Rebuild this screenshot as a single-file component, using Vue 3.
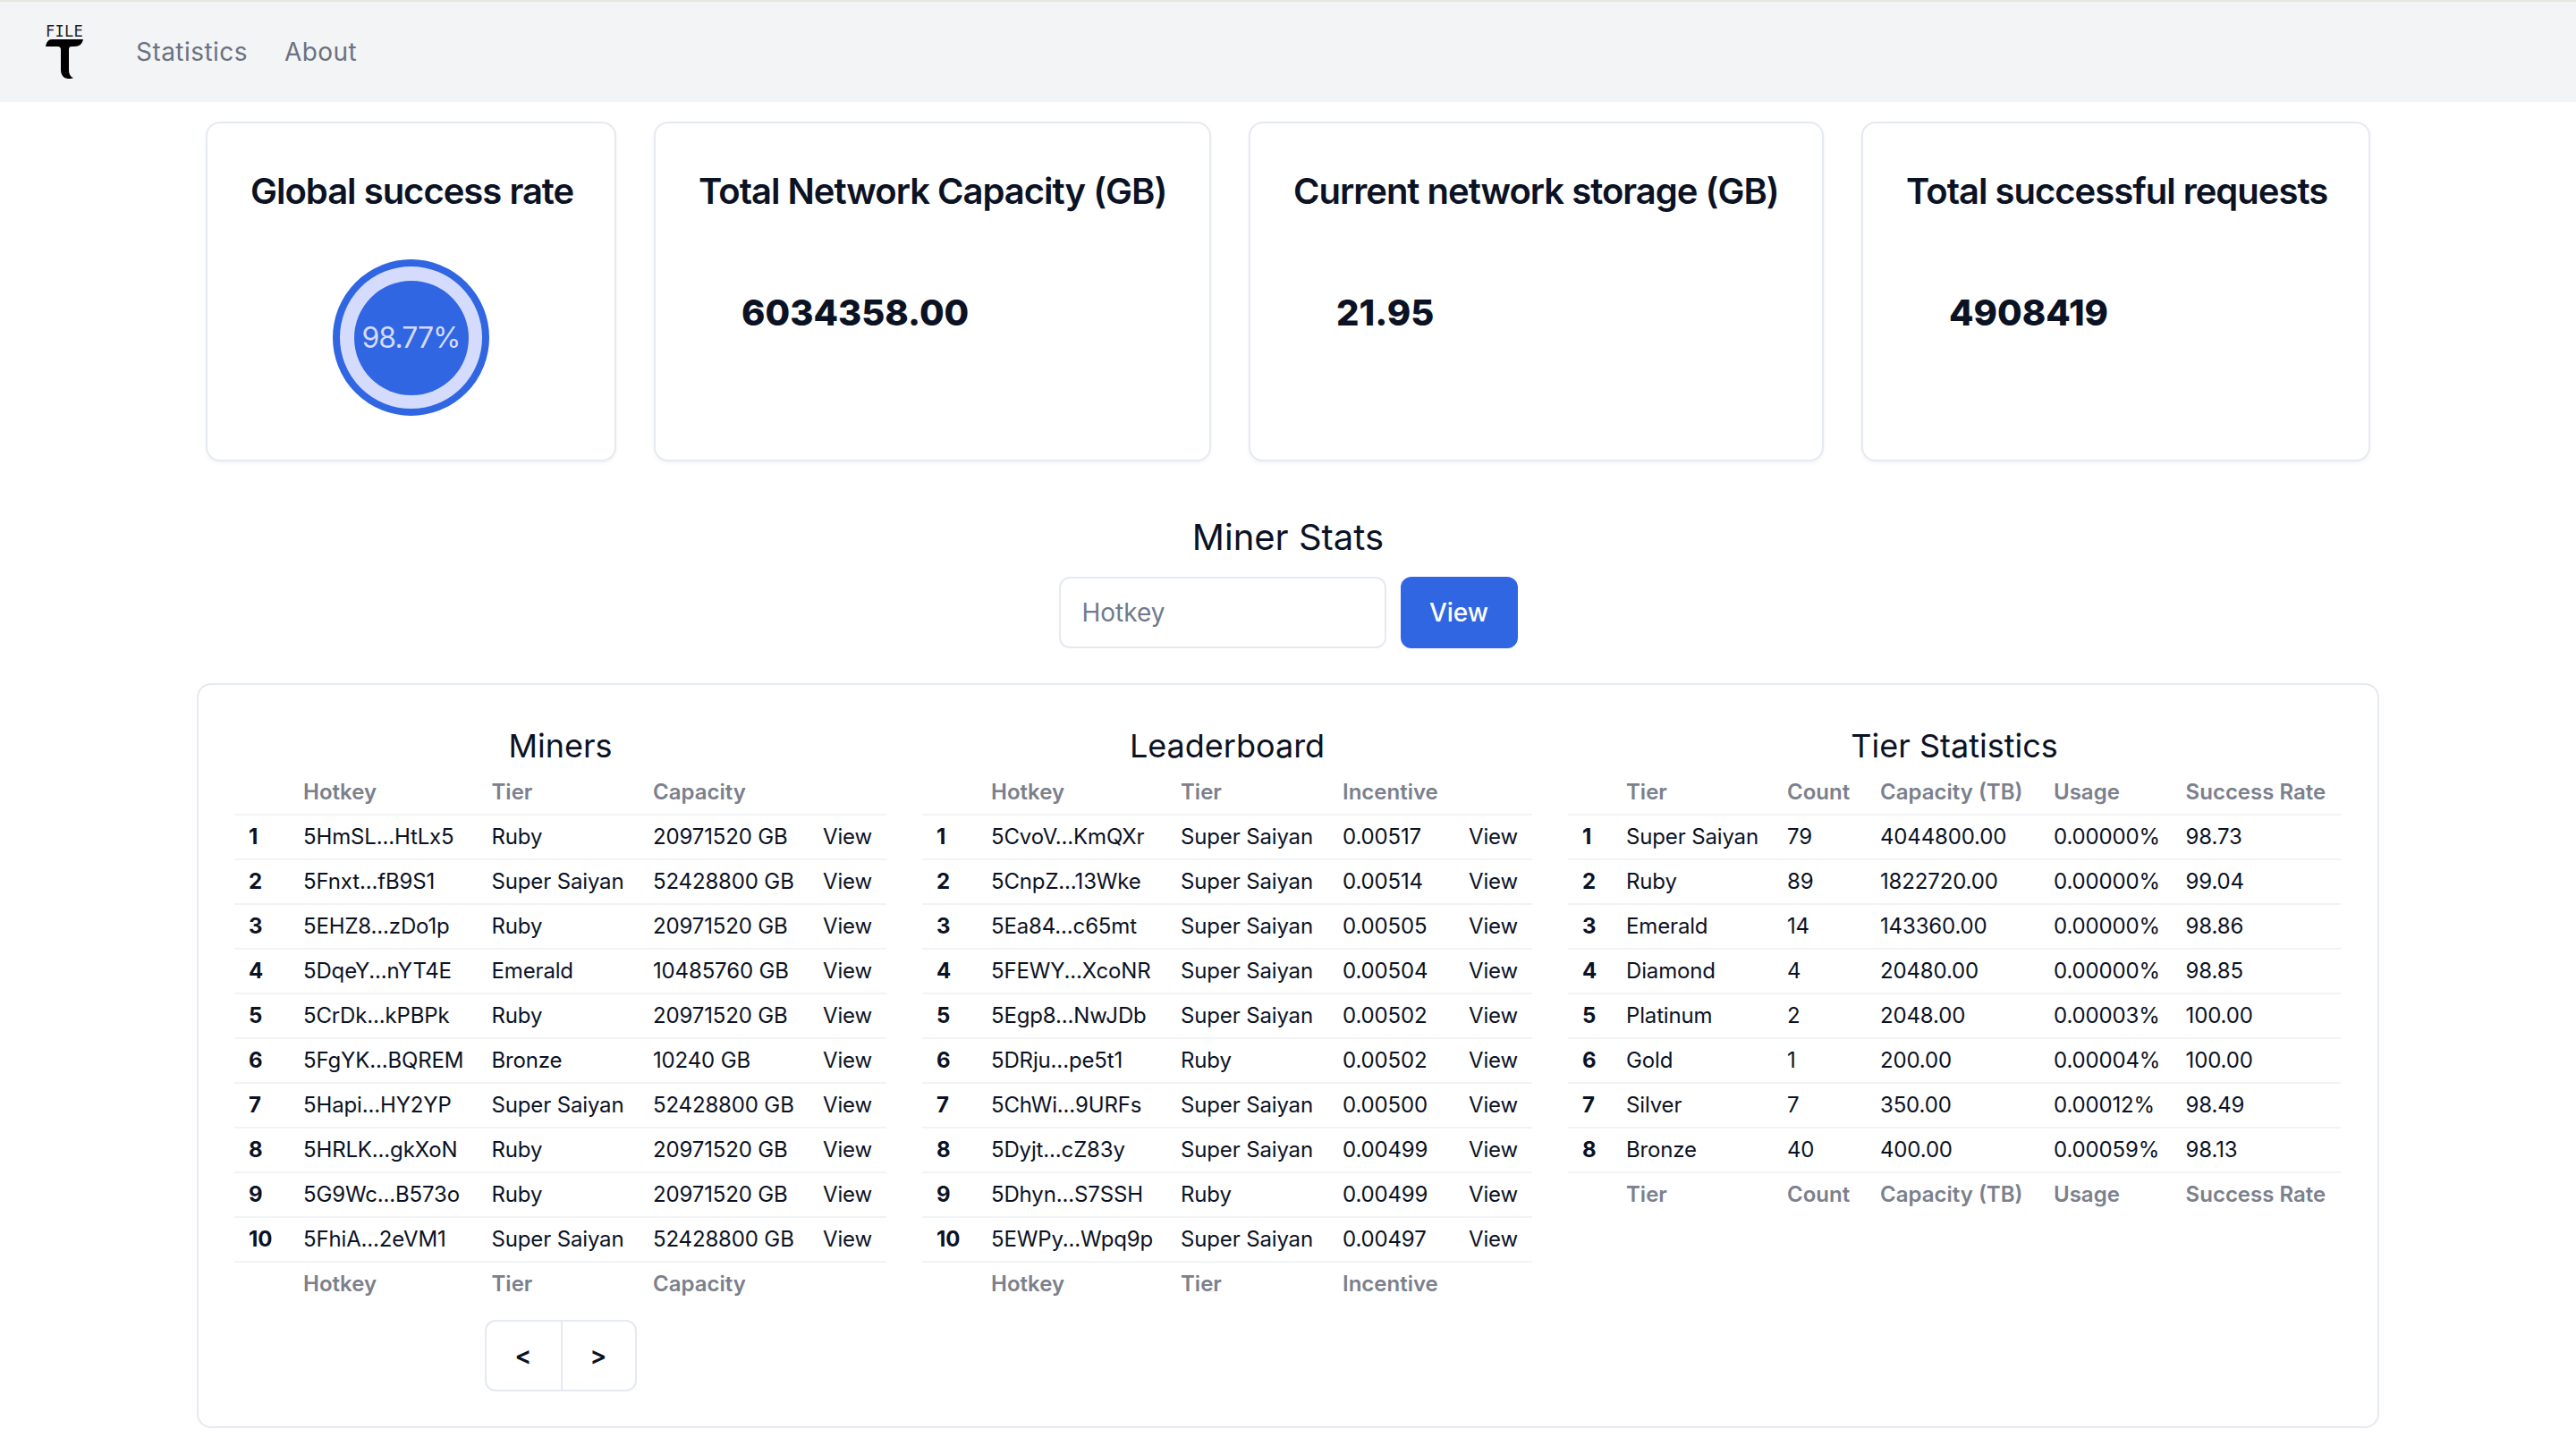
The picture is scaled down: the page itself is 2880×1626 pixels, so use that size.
<script setup>
const miners = [
  ['5HmSL...HtLx5', 'Ruby', '20971520 GB'],
  ['5Fnxt...fB9S1', 'Super Saiyan', '52428800 GB'],
  ['5EHZ8...zDo1p', 'Ruby', '20971520 GB'],
  ['5DqeY...nYT4E', 'Emerald', '10485760 GB'],
  ['5CrDk...kPBPk', 'Ruby', '20971520 GB'],
  ['5FgYK...BQREM', 'Bronze', '10240 GB'],
  ['5Hapi...HY2YP', 'Super Saiyan', '52428800 GB'],
  ['5HRLK...gkXoN', 'Ruby', '20971520 GB'],
  ['5G9Wc...B573o', 'Ruby', '20971520 GB'],
  ['5FhiA...2eVM1', 'Super Saiyan', '52428800 GB'],
]

const leaders = [
  ['5CvoV...KmQXr', 'Super Saiyan', '0.00517'],
  ['5CnpZ...13Wke', 'Super Saiyan', '0.00514'],
  ['5Ea84...c65mt', 'Super Saiyan', '0.00505'],
  ['5FEWY...XcoNR', 'Super Saiyan', '0.00504'],
  ['5Egp8...NwJDb', 'Super Saiyan', '0.00502'],
  ['5DRju...pe5t1', 'Ruby', '0.00502'],
  ['5ChWi...9URFs', 'Super Saiyan', '0.00500'],
  ['5Dyjt...cZ83y', 'Super Saiyan', '0.00499'],
  ['5Dhyn...S7SSH', 'Ruby', '0.00499'],
  ['5EWPy...Wpq9p', 'Super Saiyan', '0.00497'],
]

const tiers = [
  ['Super Saiyan', '79', '4044800.00', '0.00000%', '98.73'],
  ['Ruby', '89', '1822720.00', '0.00000%', '99.04'],
  ['Emerald', '14', '143360.00', '0.00000%', '98.86'],
  ['Diamond', '4', '20480.00', '0.00000%', '98.85'],
  ['Platinum', '2', '2048.00', '0.00003%', '100.00'],
  ['Gold', '1', '200.00', '0.00004%', '100.00'],
  ['Silver', '7', '350.00', '0.00012%', '98.49'],
  ['Bronze', '40', '400.00', '0.00059%', '98.13'],
]

const tierHead = ['Tier', 'Count', 'Capacity (TB)', 'Usage', 'Success Rate']
</script>

<template>
  <div class="page">
    <nav class="navbar">
      <svg class="logo" viewBox="0 0 44 60" aria-label="File T logo">
        <text x="1" y="13" class="logo-text">FILE</text>
        <path d="M1 24 C2 19 4 16 8 16 L43 16 C42 21 39 24 33 24 L30 24 C28 24 27 25 27 27 L27 50 C27 55 29 58 32 59 C28 61 18 61 18 50 L18 28 C18 25 17 24 14 24 Z" fill="#000" />
      </svg>
      <a class="nav-link">Statistics</a>
      <a class="nav-link">About</a>
    </nav>

    <section class="stats">
      <div class="card stat first">
        <h2>Global success rate</h2>
        <div class="radial"><span>98.77%</span></div>
      </div>
      <div class="card stat second">
        <h2>Total Network Capacity (GB)</h2>
        <p class="value">6034358.00</p>
      </div>
      <div class="card stat third">
        <h2>Current network storage (GB)</h2>
        <p class="value">21.95</p>
      </div>
      <div class="card stat fourth">
        <h2>Total successful requests</h2>
        <p class="value">4908419</p>
      </div>
    </section>

    <section class="lookup">
      <h3>Miner Stats</h3>
      <div class="lookup-row">
        <input class="input" placeholder="Hotkey" />
        <button class="btn">View</button>
      </div>
    </section>

    <section class="card tables">
      <div class="col miners">
        <h3>Miners</h3>
        <table>
          <thead>
            <tr><th></th><th>Hotkey</th><th>Tier</th><th>Capacity</th><th></th></tr>
          </thead>
          <tbody>
            <tr v-for="(m, i) in miners" :key="m[0]">
              <th>{{ i + 1 }}</th>
              <td>{{ m[0] }}</td>
              <td>{{ m[1] }}</td>
              <td>{{ m[2] }}</td>
              <td>View</td>
            </tr>
          </tbody>
          <tfoot>
            <tr><th></th><th>Hotkey</th><th>Tier</th><th>Capacity</th><th></th></tr>
          </tfoot>
        </table>
        <div class="pager">
          <button>&lt;</button>
          <button>&gt;</button>
        </div>
      </div>

      <div class="col leaders">
        <h3>Leaderboard</h3>
        <table>
          <thead>
            <tr><th></th><th>Hotkey</th><th>Tier</th><th>Incentive</th><th></th></tr>
          </thead>
          <tbody>
            <tr v-for="(m, i) in leaders" :key="m[0]">
              <th>{{ i + 1 }}</th>
              <td>{{ m[0] }}</td>
              <td>{{ m[1] }}</td>
              <td>{{ m[2] }}</td>
              <td>View</td>
            </tr>
          </tbody>
          <tfoot>
            <tr><th></th><th>Hotkey</th><th>Tier</th><th>Incentive</th><th></th></tr>
          </tfoot>
        </table>
      </div>

      <div class="col tiers">
        <h3>Tier Statistics</h3>
        <table>
          <thead>
            <tr><th></th><th v-for="h in tierHead" :key="h">{{ h }}</th></tr>
          </thead>
          <tbody>
            <tr v-for="(t, i) in tiers" :key="t[0]">
              <th>{{ i + 1 }}</th>
              <td v-for="(c, j) in t" :key="j">{{ c }}</td>
            </tr>
          </tbody>
          <tfoot>
            <tr><th></th><th v-for="h in tierHead" :key="h">{{ h }}</th></tr>
          </tfoot>
        </table>
      </div>
    </section>
  </div>
</template>

<style>
html,
body {
  margin: 0;
  background: #fff;
}
</style>

<style scoped>
.page {
  font-family: Inter, 'Liberation Sans', sans-serif;
  color: #0b1224;
  height: 1626px;
  overflow: hidden;
}

.navbar {
  height: 112px;
  border-top: 2px solid #e5e7e0;
  background: #f3f4f6;
  display: flex;
  align-items: center;
  padding-left: 50px;
}

.logo {
  width: 44px;
  height: 60px;
  margin-right: 58px;
  overflow: visible;
}

.logo-text {
  font-family: 'DejaVu Sans Mono', monospace;
  font-size: 17px;
  letter-spacing: 0.3px;
  fill: #222;
}

.nav-link {
  font-size: 28px;
  letter-spacing: 0.45px;
  color: #6b7280;
  margin-right: 41px;
}

.card {
  border: 2px solid #e5e9f0;
  border-radius: 16px;
  background: #fff;
}

.stats {
  display: flex;
  gap: 42px;
  justify-content: center;
  margin-top: 22px;
}

.stat {
  height: 380px;
  box-sizing: border-box;
  padding: 48px;
  box-shadow: 0 2px 4px rgba(0, 0, 0, 0.05);
}

.first { width: 459px; }
.second { width: 623px; }
.third { width: 643px; }
.fourth { width: 569px; }

.stat h2 {
  margin: 0;
  font-size: 40px;
  line-height: 56px;
  font-weight: 600;
  letter-spacing: -1px;
  white-space: nowrap;
}

.value {
  margin: 80px 0 0 48px;
  font-size: 40px;
  line-height: 56px;
  font-weight: 800;
}

.radial {
  width: 175px;
  height: 175px;
  margin: 48px auto 0;
  box-sizing: border-box;
  border: 8px solid #3166e3;
  border-radius: 50%;
  background: #d4dbfc;
  display: flex;
  align-items: center;
  justify-content: center;
}

.radial span {
  width: 128px;
  height: 128px;
  border-radius: 50%;
  background: #3166e3;
  color: #d4dbfc;
  font-size: 32px;
  letter-spacing: -1px;
  display: flex;
  align-items: center;
  justify-content: center;
}

.lookup {
  margin-top: 57px;
  display: flex;
  flex-direction: column;
  align-items: center;
}

.lookup h3 {
  margin: 0;
  font-size: 40px;
  line-height: 56px;
  font-weight: 400;
}

.lookup-row {
  display: flex;
  gap: 16px;
  margin-top: 16px;
}

.input {
  width: 366px;
  height: 80px;
  box-sizing: border-box;
  border: 2px solid #e5e9f0;
  border-radius: 12px;
  padding: 0 24px;
  font: 28px Inter, sans-serif;
  background: #fff;
}

.input::placeholder {
  color: #6f7a8d;
}

.btn {
  width: 131px;
  height: 80px;
  border: none;
  border-radius: 12px;
  background: #3166e3;
  color: #fff;
  font: 500 28px Inter, sans-serif;
}

.tables {
  width: 2440px;
  height: 833px;
  box-sizing: border-box;
  margin: 39px auto 0;
  padding: 40px 40px 0;
  display: flex;
  gap: 40px;
}

.col {
  flex: none;
}

.col h3 {
  margin: 0;
  font-size: 36px;
  line-height: 56px;
  font-weight: 400;
  text-align: center;
}

.miners { width: 729px; }
.leaders { width: 682px; }
.tiers { width: 864px; }

table {
  width: 100%;
  table-layout: fixed;
  border-collapse: collapse;
  font-size: 24px;
  line-height: 32px;
  white-space: nowrap;
}

th,
td {
  padding: 8px 16px;
  text-align: left;
}

td {
  letter-spacing: -0.15px;
}

thead th,
tfoot th {
  color: #7b808c;
  font-weight: 600;
}

thead tr,
tbody tr {
  border-bottom: 2px solid #f1f3f5;
}

tbody th {
  font-weight: 700;
}

.miners thead th:nth-child(1),
.leaders thead th:nth-child(1) { width: 61px; }
.miners thead th:nth-child(2) { width: 210.5px; }
.miners thead th:nth-child(3) { width: 180.5px; }
.miners thead th:nth-child(4) { width: 190px; }
.leaders thead th:nth-child(2) { width: 212px; }
.leaders thead th:nth-child(3) { width: 181px; }
.leaders thead th:nth-child(4) { width: 141px; }

.tiers thead th:nth-child(1) { width: 49px; }
.tiers thead th:nth-child(2) { width: 180px; }
.tiers thead th:nth-child(3) { width: 104px; }
.tiers thead th:nth-child(4) { width: 194px; }
.tiers thead th:nth-child(5) { width: 147.6px; }

thead th {
  box-sizing: border-box;
}

.pager {
  display: flex;
  justify-content: center;
  margin-top: 16px;
}

.pager button {
  width: 85px;
  height: 80px;
  background: #fff;
  border: 2px solid #e5e9f0;
  font: 600 28px Inter, sans-serif;
  color: #0b1224;
}

.pager button:first-child {
  border-radius: 12px 0 0 12px;
  border-right: 0;
}

.pager button:last-child {
  border-radius: 0 12px 12px 0;
}
</style>
